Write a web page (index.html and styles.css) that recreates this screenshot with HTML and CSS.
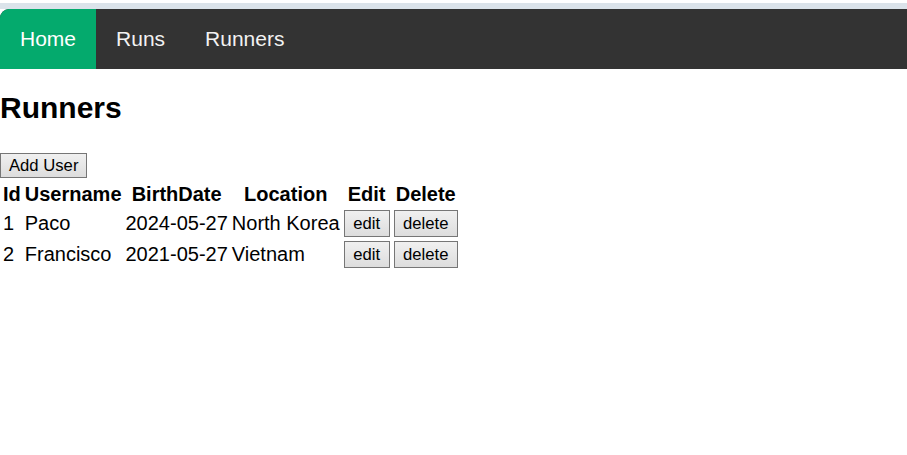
FILE: index.html
```html
<!DOCTYPE html>
<html>
<head>
<meta charset="utf-8">
<title>Runners</title>
<link rel="stylesheet" href="styles.css">
</head>
<body>
<div class="topstrip"></div>
<nav class="topnav">
  <a class="nav-link active" href="#">Home</a>
  <a class="nav-link" href="#">Runs</a>
  <a class="nav-link" href="#">Runners</a>
</nav>
<main class="content">
  <h2 class="title">Runners</h2>
  <button class="btn add-btn">Add User</button>
  <table class="runners">
    <thead>
      <tr><th>Id</th><th>Username</th><th>BirthDate</th><th>Location</th><th>Edit</th><th>Delete</th></tr>
    </thead>
    <tbody>
      <tr><td>1</td><td>Paco</td><td>2024-05-27</td><td>North Korea</td><td><button class="btn">edit</button></td><td><button class="btn">delete</button></td></tr>
      <tr><td>2</td><td>Francisco</td><td>2021-05-27</td><td>Vietnam</td><td><button class="btn">edit</button></td><td><button class="btn">delete</button></td></tr>
    </tbody>
  </table>
</main>
</body>
</html>
```
FILE: styles.css
```css
html, body {
  margin: 0;
  padding: 0;
  background: #ffffff;
}
body {
  font-family: "Liberation Sans", Arial, sans-serif;
  font-size: 20px;
  color: #000;
}
.topstrip {
  height: 9px;
  background: linear-gradient(#ffffff 0, #ffffff 3px, #dbe3ea 3px);
}
.topnav {
  display: flex;
  height: 60px;
  background: #333333;
  border-top-left-radius: 9px;
  overflow: hidden;
}
.nav-link {
  display: flex;
  align-items: center;
  padding: 0 20px;
  color: #f2f2f2;
  text-decoration: none;
  font-size: 21px;
}
.nav-link.active {
  background: #04aa6d;
  color: #ffffff;
}
.title {
  font-size: 30px;
  font-weight: bold;
  margin: 22px 0 28px;
}
.btn {
  font-family: "Liberation Sans", Arial, sans-serif;
  font-size: 16.67px;
  padding: 2px 8.5px;
  margin: 0;
  border: 1px solid #767676;
  border-radius: 0;
  background: linear-gradient(#f0f0f0, #dddddd);
  color: #000;
  line-height: 21px;
}
.add-btn {
  display: block;
  padding: 0 8px;
  height: 25px;
  line-height: 23px;
}
.runners {
  border-spacing: 2.5px;
  margin-top: 2px;
}
.runners th, .runners td {
  padding: 1px;
  font-size: 20px;
}
.runners th {
  font-weight: bold;
  text-align: center;
}
.runners td {
  text-align: left;
}
```
